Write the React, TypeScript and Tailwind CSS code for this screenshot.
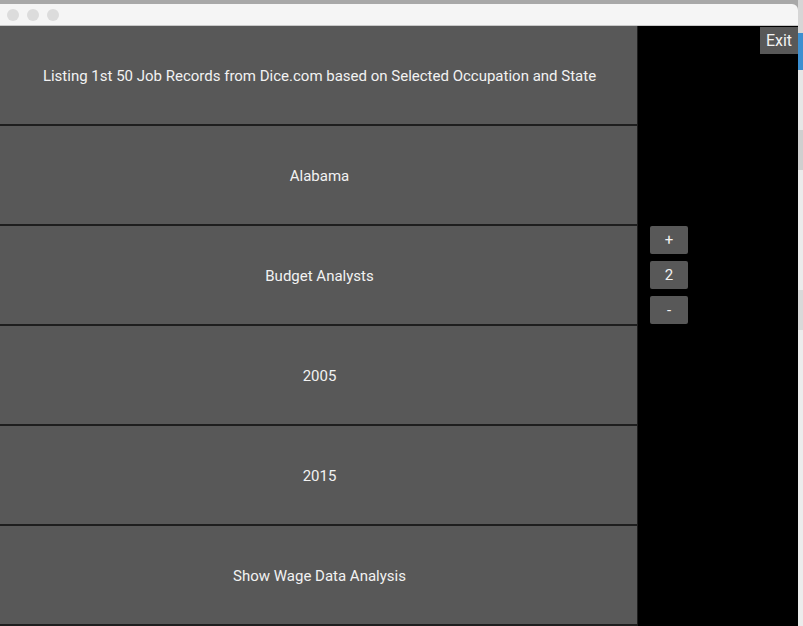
const rows = [
  'Listing 1st 50 Job Records from Dice.com based on Selected Occupation and State',
  'Alabama',
  'Budget Analysts',
  '2005',
  '2015',
  'Show Wage Data Analysis',
];

function SmallButton({ label }: { label: string }) {
  return (
    <button className="w-[38px] h-[28px] bg-[#585858] rounded-[2px] text-[#f2f2f2] text-[15px] leading-none flex items-center justify-center">
      {label}
    </button>
  );
}

export default function App() {
  return (
    <div
      className="w-[803px] h-[626px] overflow-hidden flex bg-[#a8a8a8]"
      style={{ fontFamily: 'Roboto, "Liberation Sans", sans-serif' }}
    >
      <div className="w-[798px] h-full flex flex-col pt-[4px]">
        <div className="h-[22px] bg-[#f5f5f5] rounded-tr-[6px] border-b border-[#c8c8c8] flex items-center gap-[8px] pl-[7px]">
          <span className="w-[12px] h-[12px] rounded-full bg-[#dcdcdc]" />
          <span className="w-[12px] h-[12px] rounded-full bg-[#dcdcdc]" />
          <span className="w-[12px] h-[12px] rounded-full bg-[#dcdcdc]" />
        </div>
        <div className="flex-1 bg-black flex">
          <div className="w-[638px] flex flex-col">
            {rows.map((label) => (
              <div
                key={label}
                className="h-[100px] bg-[#585858] border-b-2 border-r border-[#1e1e1e] flex items-center justify-center pt-[2px] pl-[2px] text-[15px] text-[#f2f2f2]"
              >
                {label}
              </div>
            ))}
          </div>
          <div className="flex-1 flex flex-col">
            <div className="flex justify-end pt-[1px]">
              <button className="w-[38px] h-[27px] bg-[#585858] text-[#f2f2f2] text-[16px] leading-none flex items-center justify-center">
                Exit
              </button>
            </div>
            <div className="flex flex-col gap-[7px] pl-[12px] mt-[172px]">
              <SmallButton label="+" />
              <SmallButton label="2" />
              <SmallButton label="-" />
            </div>
          </div>
        </div>
      </div>
      <div className="w-[5px] h-full flex flex-col">
        <div className="h-[33px] bg-[#d6d6d6]" />
        <div className="h-[37px] bg-[#3c8fd0]" />
        <div className="h-[60px] bg-[#e6e6e6]" />
        <div className="h-[40px] bg-[#cfcfcf]" />
        <div className="h-[120px] bg-[#ebebeb]" />
        <div className="h-[40px] bg-[#d9d9d9]" />
        <div className="flex-1 bg-[#ececec]" />
      </div>
    </div>
  );
}
